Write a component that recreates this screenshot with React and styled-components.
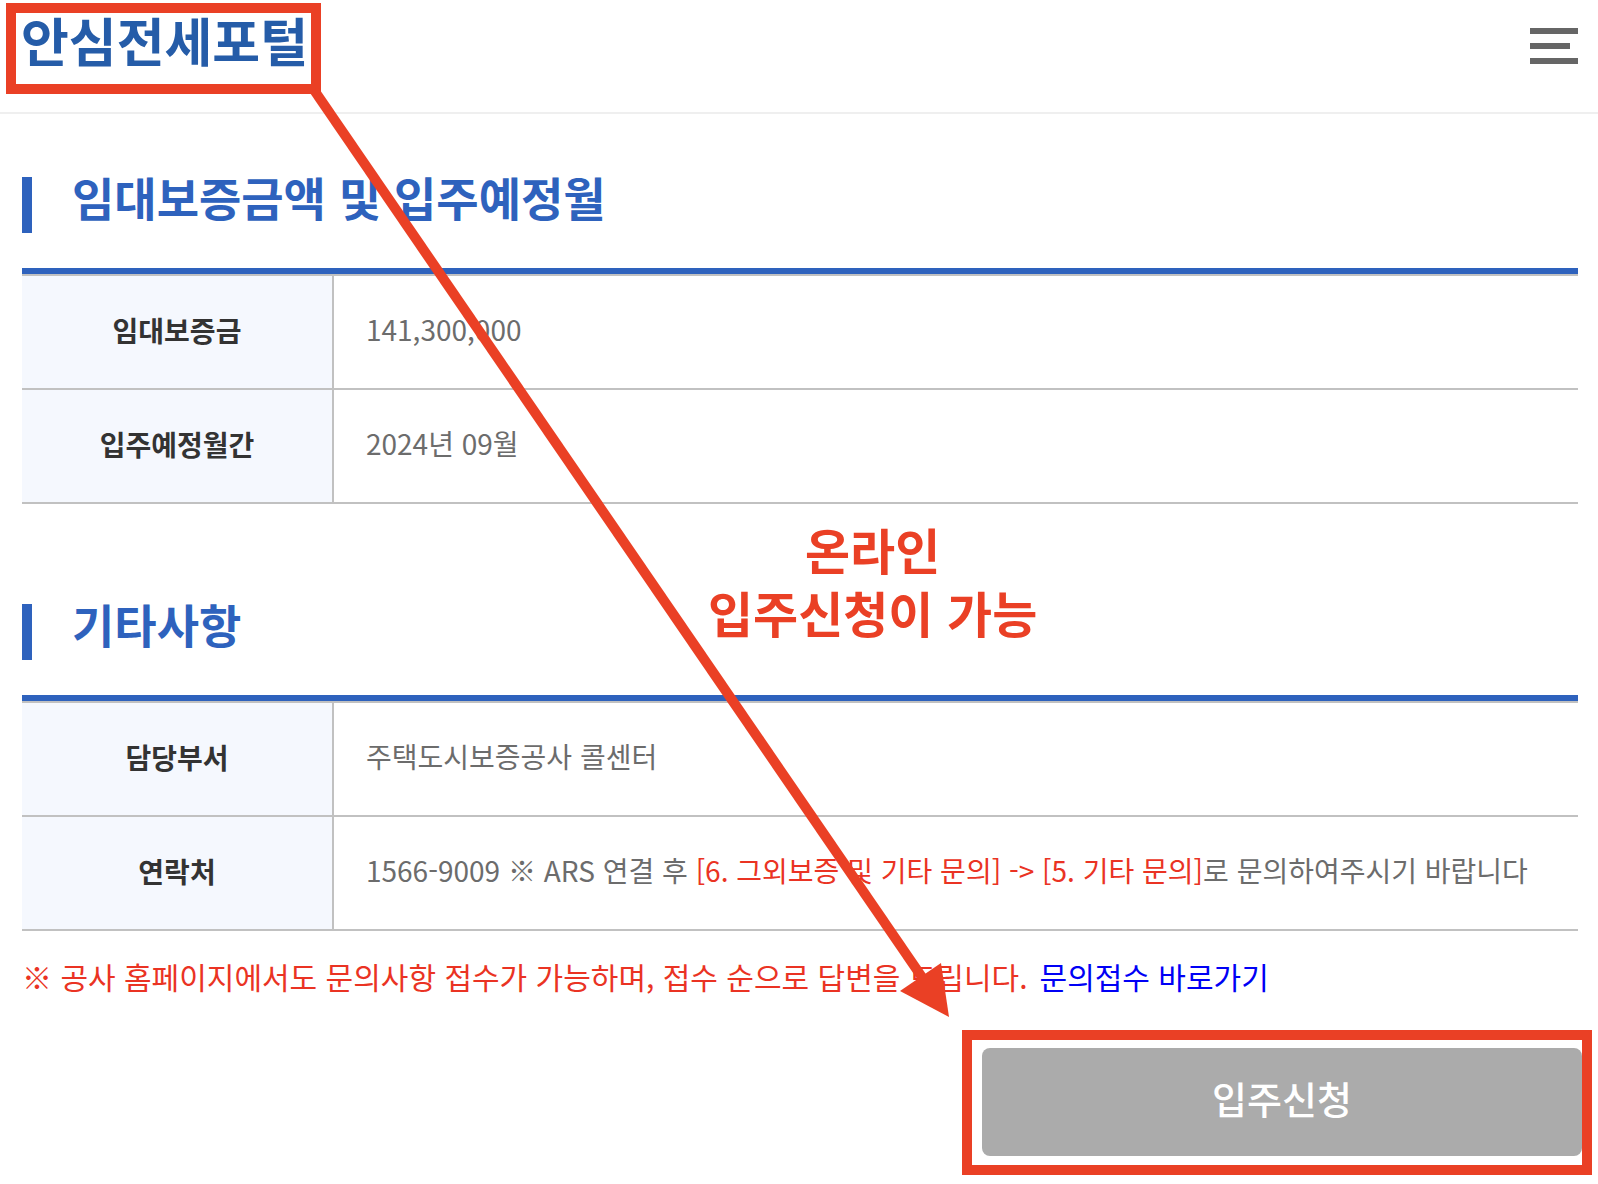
import React from "react";
import styled, { createGlobalStyle } from "styled-components";

const MARK = "#ea4025";
const BLUE = "#2e62bd";
const LINE = "#c1c1c1";

const GlobalStyle = createGlobalStyle`
    * {
        box-sizing: border-box;
    }

    body {
        margin: 0;
        background-color: #fff;
        font-family: "Noto Sans CJK KR", "Noto Sans", sans-serif;
    }
`

const Page = styled.div`
    position: relative;
    padding-bottom: 9px;
`

const Header = styled.header`
    display: flex;
    justify-content: space-between;
    align-items: flex-start;
    padding: 3px 20px 18px 6px;
    border-bottom: 2px solid #efefef;
`

const Logo = styled.a`
    padding: 1px 3px 18px 5px;
    border: 10px solid ${MARK};
    color: #255ca8;
    font-size: 52px;
    font-weight: 700;
    line-height: 52px;
    text-decoration: none;
    white-space: nowrap;
`

const MenuButton = styled.button`
    display: flex;
    flex-direction: column;
    gap: 9px;
    width: 48px;
    margin-top: 25px;
    padding: 0;
    border: 0;
    background: none;
    cursor: pointer;
`

const MenuBar = styled.span`
    width: ${pr => pr.$short ? "40px" : "48px"};
    height: 6px;
    background-color: #666;
`

const Main = styled.main`
    padding: 63px 20px 0 22px;
`

const Section = styled.section`
    & + & {
        margin-top: 100px;
    }
`

const Title = styled.h2`
    display: flex;
    gap: 40px;
    margin: 0 0 35px;
    color: ${BLUE};
    font-size: 46px;
    font-weight: 700;
    line-height: 38px;

    &::before {
        content: "";
        width: 10px;
        height: 56px;
        background-color: ${BLUE};
    }
`

const Table = styled.table`
    width: 100%;
    border-top: 6px solid ${BLUE};
    border-spacing: 0;
    table-layout: fixed;
`

const Row = styled.tr`
    &:first-child > * {
        border-top: 2px solid ${LINE};
    }
`

const Label = styled.th`
    width: 312px;
    padding: 34px 0 38px;
    border-right: 2px solid ${LINE};
    border-bottom: 2px solid ${LINE};
    background-color: #f5f8fe;
    color: #333;
    font-size: 28px;
    font-weight: 700;
    line-height: 40px;
`

const Value = styled.td`
    padding: 33px 0 39px 32px;
    border-bottom: 2px solid ${LINE};
    color: #6c6c6c;
    font-size: 28px;
    line-height: 40px;
    white-space: nowrap;
`

const Red = styled.span`
    color: #ea3323;
`

const Notice = styled.p`
    display: flex;
    gap: 12px;
    margin: 23px 0 0;
    color: #ea3323;
    font-size: 30px;
    line-height: 44px;
    white-space: nowrap;
`

const NoticeLink = styled.a`
    color: #0000f5;
    text-decoration: none;
`

const Actions = styled.div`
    display: flex;
    justify-content: flex-end;
    padding: 32px 6px 0;
`

const Highlight = styled.div`
    padding: 8px 0 9px 10px;
    border: 10px solid ${MARK};
`

const ApplyButton = styled.button`
    display: block;
    width: 600px;
    height: 108px;
    padding: 0 0 10px;
    border: 0;
    border-radius: 8px;
    background-color: #ababab;
    color: #fff;
    font-family: inherit;
    font-size: 38px;
    font-weight: 500;
    cursor: pointer;
`

const Callout = styled.p`
    position: absolute;
    top: 517px;
    left: 708px;
    margin: 0;
    color: ${MARK};
    font-size: 49px;
    font-weight: 700;
    line-height: 63px;
    text-align: center;
`

const Arrow = styled.svg`
    position: absolute;
    top: 0;
    left: 0;
    width: 100%;
    height: 100%;
    pointer-events: none;
`

function InfoSection({ title, rows }) {
    return (
        <Section>
            <Title>{title}</Title>
            <Table>
                <tbody>
                    {rows.map(([label, value]) => (
                        <Row key={label}>
                            <Label scope="row">{label}</Label>
                            <Value>{value}</Value>
                        </Row>
                    ))}
                </tbody>
            </Table>
        </Section>
    )
}

const depositRows = [
    ["임대보증금", "141,300,000"],
    ["입주예정월간", "2024년 09월"],
]

const etcRows = [
    ["담당부서", "주택도시보증공사 콜센터"],
    ["연락처", <>1566-9009 ※ ARS 연결 후 <Red>[6. 그외보증 및 기타 문의] -&gt; [5. 기타 문의]</Red>로 문의하여주시기 바랍니다</>],
]

function App() {
    return (
        <Page lang="ko">
            <GlobalStyle />
            <Header>
                <Logo href="#">안심전세포털</Logo>
                <MenuButton type="button" aria-label="메뉴">
                    <MenuBar />
                    <MenuBar $short />
                    <MenuBar />
                </MenuButton>
            </Header>
            <Main>
                <InfoSection title="임대보증금액 및 입주예정월" rows={depositRows} />
                <InfoSection title="기타사항" rows={etcRows} />
                <Notice>
                    <span>※ 공사 홈페이지에서도 문의사항 접수가 가능하며, 접수 순으로 답변을 드립니다.</span>
                    <NoticeLink href="#">문의접수 바로가기</NoticeLink>
                </Notice>
            </Main>
            <Actions>
                <Highlight>
                    <ApplyButton type="button">입주신청</ApplyButton>
                </Highlight>
            </Actions>
            <Callout>온라인<br />입주신청이 가능</Callout>
            <Arrow viewBox="0 0 1598 1184" preserveAspectRatio="none" aria-hidden="true">
                <line x1="314" y1="90" x2="926" y2="983" stroke={MARK} strokeWidth="10" />
                <polygon points="949,1017 900,991 941,963" fill={MARK} />
            </Arrow>
        </Page>
    )
}

export default App;
